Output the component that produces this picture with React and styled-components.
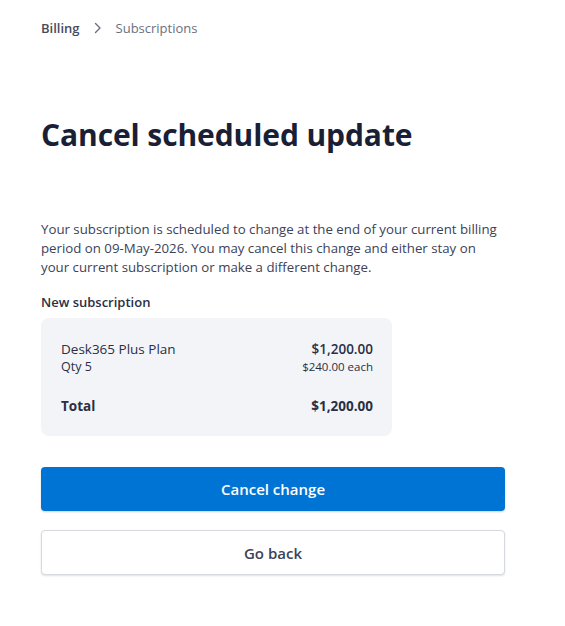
import React from "react";
import styled, { createGlobalStyle } from "styled-components";

const Global = createGlobalStyle`
  html, body { margin: 0; padding: 0; background: #ffffff; }
  body { font-family: "Open Sans", "Noto Sans", sans-serif; -webkit-font-smoothing: antialiased; }
  * { box-sizing: border-box; }
`;

const Page = styled.div`
  width: 565px;
  padding: 18px 60px 40px 41px;
  display: flex;
  flex-direction: column;
`;

const Breadcrumb = styled.nav`
  display: flex;
  align-items: center;
  gap: 14px;
  font-size: 13px;
  height: 20px;
`;

const Crumb = styled.span`
  color: ${(p) => (p.$current ? "#6a7080" : "#454b5e")};
  font-weight: ${(p) => (p.$current ? 400 : 600)};
`;

const Title = styled.h1`
  margin: 77px 0 0;
  font-size: 30px;
  line-height: 40px;
  font-weight: 700;
  color: #1a1f36;
  letter-spacing: -0.1px;
`;

const Intro = styled.p`
  margin: 65px 0 0;
  font-size: 13.25px;
  line-height: 19px;
  color: #3c4257;
  max-width: 464px;
`;

const SectionLabel = styled.h2`
  margin: 15px 0 0;
  font-size: 13px;
  line-height: 20px;
  font-weight: 600;
  color: #2a2f45;
`;

const Card = styled.div`
  margin-top: 6px;
  width: 351px;
  background: #f3f4f8;
  border-radius: 8px;
  padding: 22px 19px 20px 20px;
  display: flex;
  flex-direction: column;
`;

const Row = styled.div`
  display: flex;
  justify-content: space-between;
  align-items: baseline;
  margin-top: ${(p) => p.$gap || 0}px;
`;

const Label = styled.span`
  font-size: ${(p) => (p.$small ? "12.5px" : "13.5px")};
  line-height: ${(p) => (p.$small ? "16px" : "19px")};
  font-weight: ${(p) => (p.$bold ? 700 : 400)};
  color: #2a2f45;
`;

const Amount = styled.span`
  font-size: ${(p) => (p.$small ? "11.5px" : "13.5px")};
  line-height: ${(p) => (p.$small ? "16px" : "19px")};
  font-weight: ${(p) => (p.$bold ? 700 : p.$small ? 400 : 600)};
  color: #2a2f45;
`;

const Actions = styled.div`
  margin-top: 31px;
  display: flex;
  flex-direction: column;
  gap: 19px;
  width: 464px;
`;

const Button = styled.button`
  height: ${(p) => (p.$primary ? "44px" : "45px")};
  width: 100%;
  border-radius: 4px;
  font-family: inherit;
  font-size: 15px;
  font-weight: 600;
  cursor: pointer;
  border: ${(p) => (p.$primary ? "none" : "1px solid #d6d9de")};
  background: ${(p) => (p.$primary ? "#0074d4" : "#ffffff")};
  color: ${(p) => (p.$primary ? "#ffffff" : "#3c4257")};
  box-shadow: ${(p) =>
    p.$primary
      ? "0 1px 2px rgba(0,0,0,0.18)"
      : "0 1px 2px rgba(0,0,0,0.12)"};
`;

const Chevron = () => (
  <svg width="8" height="12" viewBox="0 0 8 12" fill="none">
    <path d="M1.5 1.5 L6 6 L1.5 10.5" stroke="#6a7080" strokeWidth="1.4" strokeLinecap="round" strokeLinejoin="round" />
  </svg>
);

export default function App() {
  return (
    <>
      <Global />
      <Page>
        <Breadcrumb>
          <Crumb>Billing</Crumb>
          <Chevron />
          <Crumb $current>Subscriptions</Crumb>
        </Breadcrumb>
        <Title>Cancel scheduled update</Title>
        <Intro>
          Your subscription is scheduled to change at the end of your current billing
          period on 09-May-2026. You may cancel this change and either stay on your
          current subscription or make a different change.
        </Intro>
        <SectionLabel>New subscription</SectionLabel>
        <Card>
          <Row>
            <Label>Desk365 Plus Plan</Label>
            <Amount>$1,200.00</Amount>
          </Row>
          <Row>
            <Label $small>Qty 5</Label>
            <Amount $small>$240.00 each</Amount>
          </Row>
          <Row $gap={22}>
            <Label $bold>Total</Label>
            <Amount $bold>$1,200.00</Amount>
          </Row>
        </Card>
        <Actions>
          <Button $primary>Cancel change</Button>
          <Button>Go back</Button>
        </Actions>
      </Page>
    </>
  );
}
